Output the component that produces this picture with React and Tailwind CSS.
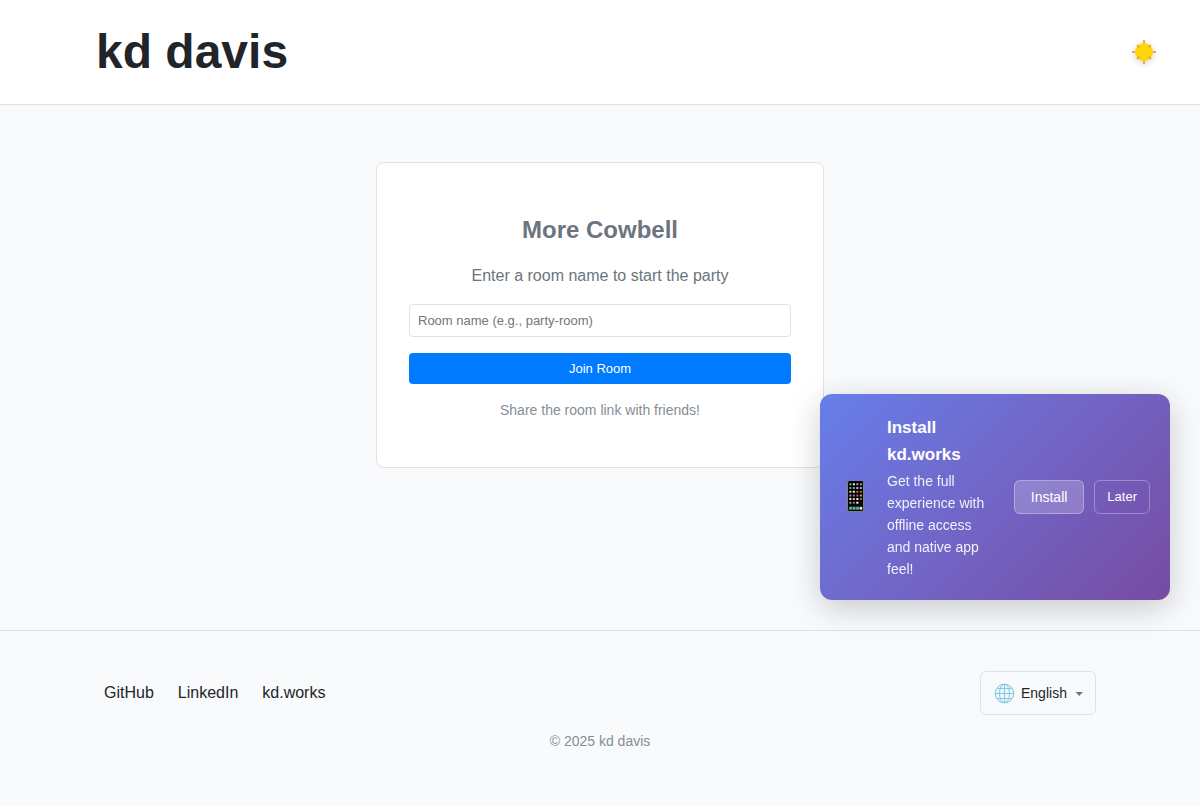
import React from "react";

function SunIcon() {
  return (
    <svg viewBox="0 0 24 24" className="size-6 drop-shadow-[0_2px_3px_rgba(0,0,0,0.15)]" aria-hidden="true">
      <g stroke="#f0a860" strokeWidth="2">
        <path d="M12 0v5M12 19v5M0 12h5M19 12h5" />
      </g>
      <circle cx="12" cy="12" r="9" fill="#ffd60a" />
      <g stroke="#e8a02c" strokeWidth="1.6">
        <path d="M5 5l2.4 2.4M19 5l-2.4 2.4M5 19l2.4-2.4M19 19l-2.4-2.4" />
      </g>
    </svg>
  );
}

const APP_ROWS = [
  ["#3ddc5a", "#f4f4f4", "#e58ad8", "#9aa0a6"],
  ["#3b9cf0", "#8d9299", "#f3c94b", "#5ac8fa"],
  ["#f5d94a", "#f4f4f4", "#ee5a4f", "#777b80"],
  ["#d76be0", "#36a3f2", "#ef5548", "#f39b38"],
  ["#f4f4f4", "#f2cf4d", "#f4f4f4", "#7b7f85"],
  ["#42b4f5", "#f0574c", "#f4f4f4", null],
];
const DOCK = ["#43d860", "#4cb6f5", "#4ade68", "#f4f4f4"];

function PhoneIcon() {
  return (
    <svg viewBox="0 0 32 32" className="size-8 shrink-0" aria-hidden="true">
      <rect x="7.5" y="-0.5" width="16" height="31" rx="2" fill="#050505" stroke="#85827c" />
      {APP_ROWS.map((row, r) =>
        row.map((color, c) =>
          color ? (
            <rect key={`${r}-${c}`} x={9.4 + c * 3.5} y={2.3 + r * 3.7} width="2" height="2" rx="0.5" fill={color} />
          ) : null
        )
      )}
      <rect x="9" y="25.4" width="13" height="3.6" fill="#3b3f45" />
      {DOCK.map((color, c) => (
        <rect key={c} x={9.4 + c * 3.5} y="26.1" width="2.3" height="2.3" rx="0.5" fill={color} />
      ))}
    </svg>
  );
}

function GlobeIcon() {
  return (
    <svg viewBox="0 0 22 22" className="size-[22px] shrink-0" fill="none" stroke="#7cc3e0" aria-hidden="true">
      <circle cx="11.5" cy="11.5" r="9.3" fill="#edf8fd" strokeWidth="1" />
      <ellipse cx="11.5" cy="11.5" rx="5" ry="9.3" strokeWidth="0.9" />
      <path d="M11.5 2.2v18.6M2.2 11.5h18.6M4.4 6.5h14.2M4.4 16.5h14.2" strokeWidth="0.9" />
    </svg>
  );
}

function InstallPrompt() {
  return (
    <aside className="absolute right-[30px] bottom-[30px] flex w-[350px] items-center gap-[15px] rounded-xl bg-linear-135 from-[#667eea] to-[#764ba2] p-5 text-white shadow-[0_8px_32px_rgba(0,0,0,0.2)]">
      <PhoneIcon />
      <div className="min-w-0 flex-1">
        <h3 className="mb-[2px] text-[17px] leading-[27px] font-bold">Install kd.works</h3>
        <p className="text-sm leading-[22px] opacity-90">
          Get the full experience with offline access and native app feel!
        </p>
      </div>
      <div className="flex gap-[10px]">
        <button type="button" className="h-[34px] rounded-md border border-white/30 bg-white/20 px-4 text-sm">
          Install
        </button>
        <button type="button" className="h-[34px] rounded-md border border-white/30 px-3 text-[13px]">
          Later
        </button>
      </div>
    </aside>
  );
}

export default function App() {
  return (
    <div className="flex min-h-screen flex-col bg-[#f9fafc] font-['Liberation_Sans',Arial,sans-serif] text-[#212529]">
      <header className="flex items-center justify-between border-b border-[#dee2e6] bg-white py-6 pr-9 pl-24">
        <h1 className="text-5xl leading-[56px] font-bold">kd davis</h1>
        <button type="button" aria-label="Toggle theme" className="flex size-10 items-center justify-center">
          <SunIcon />
        </button>
      </header>

      <main className="relative flex flex-1 flex-col items-center px-4 pt-[57px] pb-10">
        <section className="w-full max-w-md rounded-lg border border-[#dee2e6] bg-white px-8 pt-12 pb-[46px] text-center">
          <h2 className="mb-4 text-2xl leading-[38px] font-bold text-[#6c757d]">More Cowbell</h2>
          <p className="mb-[18px] text-base leading-[21px] text-[#6c757d]">Enter a room name to start the party</p>
          <form onSubmit={(e) => e.preventDefault()}>
            <input
              type="text"
              aria-label="Room name"
              placeholder="Room name (e.g., party-room)"
              className="mb-4 block h-[33px] w-full rounded border border-[#dee2e6] bg-white px-2 text-[13px] placeholder:text-[#757575]"
            />
            <button type="submit" className="block h-[31px] w-full rounded bg-[#007bff] text-[13px] text-white">
              Join Room
            </button>
          </form>
          <p className="mt-4 text-sm leading-[21px] text-[#868e96]">Share the room link with friends!</p>
        </section>
        <InstallPrompt />
      </main>

      <footer className="border-t border-[#dee2e6] px-[104px] pt-10 pb-[54px]">
        <div className="flex items-center justify-between">
          <nav className="flex gap-6 text-base">
            <a href="#github">GitHub</a>
            <a href="#linkedin">LinkedIn</a>
            <a href="#works">kd.works</a>
          </nav>
          <label className="flex h-11 items-center rounded-md border border-[#dee2e6] px-3">
            <GlobeIcon />
            <select aria-label="Language" className="mr-2 ml-1.5 appearance-none bg-transparent text-sm">
              <option>English</option>
            </select>
            <svg viewBox="0 0 8 8" className="size-2" aria-hidden="true">
              <path d="M0.5 3h7.4L4.2 7z" fill="#6c757d" />
            </svg>
          </label>
        </div>
        <p className="mt-4 text-center text-sm leading-[21px] text-[#868e96]">© 2025 kd davis</p>
      </footer>
    </div>
  );
}
